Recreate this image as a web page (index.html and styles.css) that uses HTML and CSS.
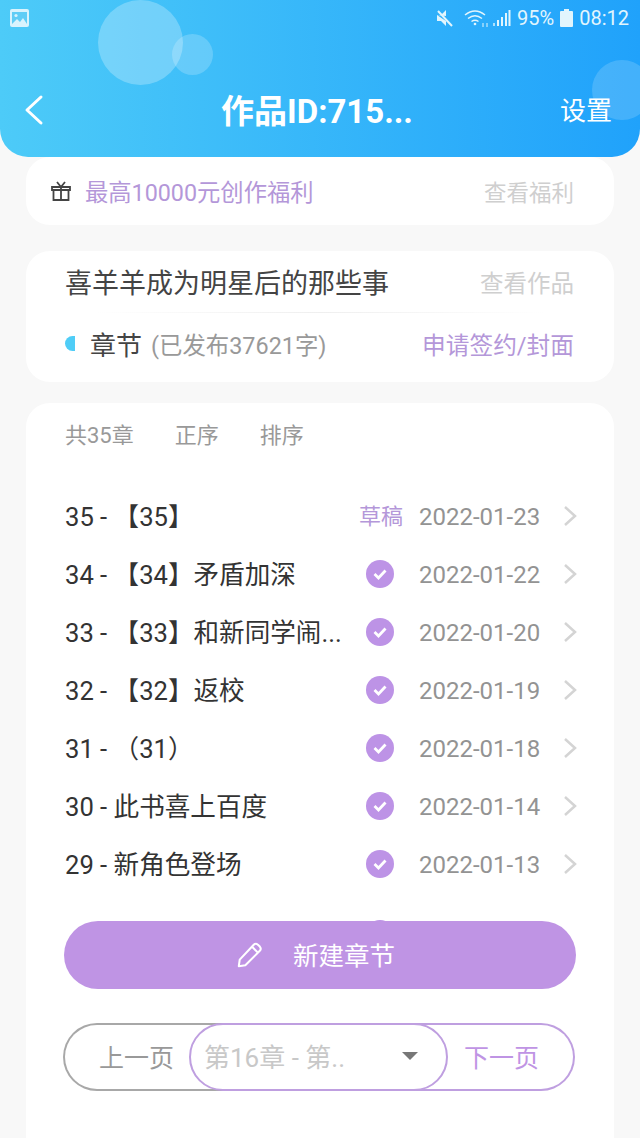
FILE: index.html
```html
<!DOCTYPE html>
<html lang="zh">
<head>
    <meta charset="UTF-8">
    <meta name="viewport" content="width=device-width, initial-scale=1.0">
    <title>作品ID</title>
    <link rel="stylesheet" href="styles.css">
</head>
<body>
    <div class="page">
        <header class="header">
            <span class="bubble bubble-big"></span>
            <span class="bubble bubble-small"></span>
            <span class="bubble bubble-right"></span>
            <div class="statusbar">
                <svg class="st-pic" width="19" height="19" viewBox="0 0 19 19"><rect width="19" height="18" rx="2" fill="#d8f3fd"/><rect x="2" y="3" width="15" height="12" fill="#5fcdf6"/><circle cx="6" cy="6.5" r="1.6" fill="#d8f3fd"/><path d="M2 15l5-5 3 3 3-4 4 6z" fill="#d8f3fd"/></svg>
                <div class="st-right">
                    <svg class="st-mute" width="20" height="20" viewBox="0 0 20 20"><path d="M2 7h4l5-5v6zM2 7v6h4l5 5v-5z" fill="#e2f5fd"/><path d="M3 3l14 15" stroke="#e2f5fd" stroke-width="2"/></svg>
                    <svg class="st-wifi" width="26" height="20" viewBox="0 0 26 20" fill="none" stroke="#e2f5fd" stroke-width="1.5"><path d="M1 7q10-8 20 0M4 10.500q7-5.500 14 0M7.500 13.500q3.500-2.500 7 0"/><circle cx="11" cy="16" r="1.300" fill="#e2f5fd" stroke="none"/><path d="M19 15v4M23 19v-4" stroke-width="1"/></svg>
                    <svg width="19" height="18" viewBox="0 0 19 18" fill="#e2f5fd"><rect x="1" y="14" width="2" height="3" opacity=".7"/><rect x="5" y="11" width="2" height="6"/><rect x="9" y="8" width="2" height="9"/><rect x="13" y="4" width="2" height="13"/><rect x="16.500" y="1" width="2" height="16"/></svg>
                    <span class="st-text">95%</span>
                    <svg width="13" height="20" viewBox="0 0 13 20" fill="#e2f5fd"><rect x="4" y="1" width="5" height="3"/><rect y="3" width="13" height="16" rx="1"/></svg>
                    <span class="st-text">08:12</span>
                </div>
            </div>
            <div class="navbar">
                <svg class="nav-back" width="20" height="32" viewBox="0 0 20 32" fill="none" stroke="#fff" stroke-width="3" stroke-linecap="round" stroke-linejoin="round"><path d="M17 3L3 16l14 13"/></svg>
                <h1 class="nav-title">作品ID:715...</h1>
                <span class="nav-action">设置</span>
            </div>
        </header>

        <section class="card card-gift">
            <svg class="gift-icon" width="22" height="22" viewBox="0 0 22 22" fill="none" stroke="#444" stroke-width="1.800"><path d="M2 7h18v3H2zM3.500 10v10h15V10M11 7v13M11 7L7 2M11 7l4-5"/></svg>
            <span class="gift-text">最高10000元创作福利</span>
            <span class="link-grey">查看福利</span>
        </section>

        <section class="card card-book">
            <div class="book-row">
                <span class="book-name">喜羊羊成为明星后的那些事</span>
                <span class="link-grey">查看作品</span>
            </div>
            <div class="book-line"></div>
            <div class="chapter-row">
                <span class="half-dot"></span>
                <span class="chapter-label">章节</span>
                <span class="chapter-count">(已发布37621字)</span>
                <span class="link-purple">申请签约/封面</span>
            </div>
        </section>

        <section class="card card-list">
            <div class="list-tabs">
                <span>共35章</span>
                <span>正序</span>
                <span>排序</span>
            </div>
            <ul class="chapters">
                <li class="chapter">
                    <span class="ch-title">35 - 【35】</span>
                    <span class="ch-draft">草稿</span>
                    <span class="ch-date">2022-01-23</span>
                    <svg class="ch-arrow" width="14" height="22" viewBox="0 0 14 22"><path d="M2 2l10 9-10 9" /></svg>
                </li>
                <li class="chapter">
                    <span class="ch-title">34 - 【34】矛盾加深</span>
                    <svg class="ch-check" width="28" height="28" viewBox="0 0 28 28"><circle cx="14" cy="14" r="14"/><path d="M8.500 14l4 4 7-7.500"/></svg>
                    <span class="ch-date">2022-01-22</span>
                    <svg class="ch-arrow" width="14" height="22" viewBox="0 0 14 22"><path d="M2 2l10 9-10 9" /></svg>
                </li>
                <li class="chapter">
                    <span class="ch-title">33 - 【33】和新同学闹...</span>
                    <svg class="ch-check" width="28" height="28" viewBox="0 0 28 28"><circle cx="14" cy="14" r="14"/><path d="M8.500 14l4 4 7-7.500"/></svg>
                    <span class="ch-date">2022-01-20</span>
                    <svg class="ch-arrow" width="14" height="22" viewBox="0 0 14 22"><path d="M2 2l10 9-10 9" /></svg>
                </li>
                <li class="chapter">
                    <span class="ch-title">32 - 【32】返校</span>
                    <svg class="ch-check" width="28" height="28" viewBox="0 0 28 28"><circle cx="14" cy="14" r="14"/><path d="M8.500 14l4 4 7-7.500"/></svg>
                    <span class="ch-date">2022-01-19</span>
                    <svg class="ch-arrow" width="14" height="22" viewBox="0 0 14 22"><path d="M2 2l10 9-10 9" /></svg>
                </li>
                <li class="chapter">
                    <span class="ch-title">31 - （31）</span>
                    <svg class="ch-check" width="28" height="28" viewBox="0 0 28 28"><circle cx="14" cy="14" r="14"/><path d="M8.500 14l4 4 7-7.500"/></svg>
                    <span class="ch-date">2022-01-18</span>
                    <svg class="ch-arrow" width="14" height="22" viewBox="0 0 14 22"><path d="M2 2l10 9-10 9" /></svg>
                </li>
                <li class="chapter">
                    <span class="ch-title">30 - 此书喜上百度</span>
                    <svg class="ch-check" width="28" height="28" viewBox="0 0 28 28"><circle cx="14" cy="14" r="14"/><path d="M8.500 14l4 4 7-7.500"/></svg>
                    <span class="ch-date">2022-01-14</span>
                    <svg class="ch-arrow" width="14" height="22" viewBox="0 0 14 22"><path d="M2 2l10 9-10 9" /></svg>
                </li>
                <li class="chapter">
                    <span class="ch-title">29 - 新角色登场</span>
                    <svg class="ch-check" width="28" height="28" viewBox="0 0 28 28"><circle cx="14" cy="14" r="14"/><path d="M8.500 14l4 4 7-7.500"/></svg>
                    <span class="ch-date">2022-01-13</span>
                    <svg class="ch-arrow" width="14" height="22" viewBox="0 0 14 22"><path d="M2 2l10 9-10 9" /></svg>
                </li>
                <li class="chapter chapter-cut">
                    <span class="ch-title">28 - 【28】误解</span>
                    <svg class="ch-check" width="28" height="28" viewBox="0 0 28 28"><circle cx="14" cy="14" r="14"/><path d="M8.500 14l4 4 7-7.500"/></svg>
                    <span class="ch-date">2022-01-12</span>
                    <svg class="ch-arrow" width="14" height="22" viewBox="0 0 14 22"><path d="M2 2l10 9-10 9" /></svg>
                </li>
            </ul>
            <div class="list-footer">
                <button class="new-btn">
                    <svg width="28" height="28" viewBox="0 0 30 30" fill="none" stroke="#fff" stroke-width="2.200" stroke-linejoin="round"><path d="M3 27l1-7L19 4q2-2 4.500 0l2 2q2 2.500 0 4.500L10 26zM17 6l7 7"/></svg>
                    <span class="new-label">新建章节</span>
                </button>
                <div class="pager">
                    <span class="pager-prev">上一页</span>
                    <div class="pager-select">
                        <span class="pager-value">第16章 - 第..</span>
                        <span class="pager-caret"></span>
                    </div>
                    <span class="pager-next">下一页</span>
                </div>
            </div>
        </section>
    </div>
</body>
</html>
```

FILE: styles.css
```css
* {
    box-sizing: border-box;
}
html, body {
    margin: 0;
    padding: 0;
}
body {
    font-family: Roboto, "Noto Sans CJK SC", sans-serif;
    background: #f8f8f8;
}
.page {
    width: 640px;
    height: 1138px;
    overflow: hidden;
    display: flex;
    flex-direction: column;
}
.header {
    position: relative;
    height: 157px;
    flex-shrink: 0;
    overflow: hidden;
    z-index: 1;
    border-radius: 0 0 28px 28px;
    background: linear-gradient(90deg, #4dcbf8 0%, #20a2fb 100%);
}
.bubble {
    position: absolute;
    border-radius: 50%;
    background: rgba(255, 255, 255, 0.26);
}
.bubble-big {
    left: 98px;
    top: 0;
    width: 85px;
    height: 85px;
}
.bubble-small {
    left: 172px;
    top: 34px;
    width: 41px;
    height: 41px;
    background: rgba(255, 255, 255, 0.2);
}
.bubble-right {
    left: 592px;
    top: 60px;
    width: 60px;
    height: 60px;
    background: rgba(255, 255, 255, 0.16);
}
.statusbar {
    position: relative;
    height: 36px;
    padding: 0 11px 0 10px;
    display: flex;
    align-items: center;
    justify-content: space-between;
}
.st-right {
    display: flex;
    align-items: center;
    gap: 6px;
}
.st-mute {
    margin-right: 3px;
}
.st-wifi {
    margin-right: -4px;
}
.st-text {
    font-family: Roboto, sans-serif;
    font-size: 20px;
    color: #e2f5fd;
}
.navbar {
    position: relative;
    height: 121px;
    padding: 27px 28px 0 24px;
    display: flex;
    align-items: center;
}
.nav-title {
    flex: 1;
    margin: 0 0 3px 30px;
    text-align: center;
    font-size: 33px;
    font-weight: 700;
    color: #fff;
}
.nav-action {
    margin-bottom: 4px;
    font-size: 26px;
    color: #fff;
}
.card {
    margin: 0 26px;
    background: #fff;
    border-radius: 24px;
}
.card-gift {
    height: 68px;
    padding: 0 40px 0 24px;
    display: flex;
    align-items: center;
}
.gift-icon {
    margin-right: 13px;
}
.gift-text {
    flex: 1;
    font-size: 23.300px;
    color: #b497d9;
}
.link-grey {
    font-size: 23.500px;
    color: #cfcfcf;
}
.card-gift .link-grey {
    font-size: 22.500px;
}
.card-book {
    margin-top: 26px;
    height: 131px;
    padding: 0 40px;
    display: flex;
    flex-direction: column;
}
.book-row {
    height: 61px;
    display: flex;
    align-items: center;
    justify-content: space-between;
}
.book-name {
    margin-left: -1px;
    font-size: 27px;
    color: #444;
}
.book-line {
    height: 1px;
    margin: 0 30px;
    background: linear-gradient(90deg, #fff, #efefef, #fff);
}
.chapter-row {
    flex: 1;
    display: flex;
    align-items: center;
    padding-bottom: 8px;
}
.half-dot {
    width: 10px;
    height: 15px;
    margin-left: -1px;
    margin-right: 15px;
    border-radius: 8px 0 0 8px;
    background: #4fcdf7;
}
.chapter-label {
    font-size: 26px;
    color: #444;
    margin-right: 9px;
}
.chapter-count {
    flex: 1;
    font-size: 23.400px;
    color: #999;
}
.link-purple {
    font-size: 23.700px;
    color: #b497d9;
}
.card-list {
    margin-top: 21px;
    flex: 1;
    position: relative;
    border-radius: 24px 24px 0 0;
    overflow: hidden;
}
.list-tabs {
    padding: 14px 39px 0;
    height: 84px;
    display: flex;
    gap: 41px;
    font-size: 22px;
    color: #999;
}
.chapters {
    list-style: none;
    margin: 0;
    padding: 0 37px 0 39px;
}
.chapter {
    height: 58px;
    display: flex;
    align-items: center;
}
.chapter-cut {
    margin-top: 12px;
}
.ch-title {
    flex: 1;
    margin-bottom: 4px;
    font-size: 25.600px;
    color: #333;
    white-space: nowrap;
}
.ch-draft {
    width: 44px;
    margin-right: 16px;
    margin-bottom: 4px;
    font-size: 22px;
    color: #b497d9;
}
.ch-check {
    margin-right: 25px;
}
.ch-check circle {
    fill: #bd93e6;
}
.ch-check path {
    fill: none;
    stroke: #fff;
    stroke-width: 2.800;
}
.ch-date {
    width: 122px;
    margin-top: 2px;
    font-size: 24px;
    color: #939393;
    white-space: nowrap;
}
.ch-arrow {
    margin-left: 22px;
}
.ch-arrow path {
    fill: none;
    stroke: #d4d4d4;
    stroke-width: 2.500;
}
.list-footer {
    position: absolute;
    left: 0;
    right: 0;
    top: 518px;
    bottom: 0;
    padding: 0 38px;
    background: #fff;
}
.new-btn {
    width: 100%;
    height: 68px;
    margin: 0;
    padding: 0 9px 0 0;
    border: none;
    border-radius: 34px;
    background: #bf94e4;
    color: #fff;
    font-family: inherit;
    font-size: 25.500px;
    display: flex;
    align-items: center;
    justify-content: center;
    gap: 29px;
}
.new-label {
    margin-bottom: 3px;
}
.pager {
    height: 68px;
    width: 512px;
    margin-top: 34px;
    margin-left: -1px;
    display: flex;
    align-items: center;
    font-size: 25px;
}
.pager-prev {
    flex: 0 0 160px;
    height: 68px;
    padding: 0 0 3px 34px;
    border: 2px solid #a8a8a8;
    border-right: none;
    border-radius: 34px 0 0 34px;
    color: #999;
    display: flex;
    align-items: center;
}
.pager-select {
    position: relative;
    flex: 0 0 259px;
    height: 68px;
    margin: 0 -34px;
    padding: 0 28px 3px 13px;
    border: 2px solid #bf9fe0;
    border-radius: 34px;
    background: #fff;
    display: flex;
    align-items: center;
    justify-content: space-between;
}
.pager-value {
    font-size: 26px;
    color: #c8c8c8;
}
.pager-caret {
    width: 0;
    height: 0;
    border-left: 8px solid transparent;
    border-right: 8px solid transparent;
    border-top: 8px solid #777;
}
.pager-next {
    flex: 0 0 161px;
    height: 68px;
    padding: 0 0 3px 50px;
    border: 2px solid #bf9fe0;
    border-left: none;
    border-radius: 0 34px 34px 0;
    color: #bf94e4;
    display: flex;
    align-items: center;
}
```
